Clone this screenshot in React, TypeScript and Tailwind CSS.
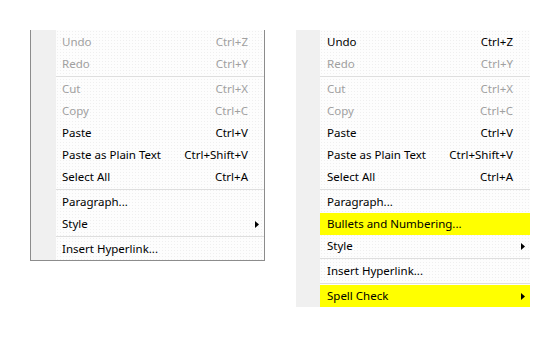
import React from 'react';

type Item =
  | { kind: 'sep' }
  | {
      kind: 'item';
      label: string;
      shortcut?: string;
      disabled?: boolean;
      submenu?: boolean;
      highlight?: boolean;
    };

const leftItems: Item[] = [
  { kind: 'item', label: 'Undo', shortcut: 'Ctrl+Z', disabled: true },
  { kind: 'item', label: 'Redo', shortcut: 'Ctrl+Y', disabled: true },
  { kind: 'sep' },
  { kind: 'item', label: 'Cut', shortcut: 'Ctrl+X', disabled: true },
  { kind: 'item', label: 'Copy', shortcut: 'Ctrl+C', disabled: true },
  { kind: 'item', label: 'Paste', shortcut: 'Ctrl+V' },
  { kind: 'item', label: 'Paste as Plain Text', shortcut: 'Ctrl+Shift+V' },
  { kind: 'item', label: 'Select All', shortcut: 'Ctrl+A' },
  { kind: 'sep' },
  { kind: 'item', label: 'Paragraph...' },
  { kind: 'item', label: 'Style', submenu: true },
  { kind: 'sep' },
  { kind: 'item', label: 'Insert Hyperlink...' },
];

const rightItems: Item[] = [
  { kind: 'item', label: 'Undo', shortcut: 'Ctrl+Z' },
  { kind: 'item', label: 'Redo', shortcut: 'Ctrl+Y', disabled: true },
  { kind: 'sep' },
  { kind: 'item', label: 'Cut', shortcut: 'Ctrl+X', disabled: true },
  { kind: 'item', label: 'Copy', shortcut: 'Ctrl+C', disabled: true },
  { kind: 'item', label: 'Paste', shortcut: 'Ctrl+V' },
  { kind: 'item', label: 'Paste as Plain Text', shortcut: 'Ctrl+Shift+V' },
  { kind: 'item', label: 'Select All', shortcut: 'Ctrl+A' },
  { kind: 'sep' },
  { kind: 'item', label: 'Paragraph...' },
  { kind: 'item', label: 'Bullets and Numbering...', highlight: true },
  { kind: 'item', label: 'Style', submenu: true },
  { kind: 'sep' },
  { kind: 'item', label: 'Insert Hyperlink...' },
  { kind: 'sep' },
  { kind: 'item', label: 'Spell Check', submenu: true, highlight: true },
];

const Arrow = () => (
  <svg width="4" height="7" viewBox="0 0 4 7" className="block">
    <path d="M0 0 L4 3.5 L0 7 Z" fill="#000" />
  </svg>
);

const dots =
  'bg-[#fdfdfd] bg-[radial-gradient(#efefef_0.6px,transparent_0.7px)] bg-[size:3px_3px]';

const MenuRows: React.FC<{ items: Item[]; padL: string; padR: string }> = ({
  items,
  padL,
  padR,
}) => (
  <div className={`flex-1 flex flex-col pt-px ${dots}`}>
    {items.map((it, i) =>
      it.kind === 'sep' ? (
        <div key={i} className="h-[3px] flex items-center">
          <div className="h-px w-full bg-[#dedede]" />
        </div>
      ) : (
        <div
          key={i}
          className={`h-[22px] flex items-center ${padL} pr-[5px] ${
            it.highlight ? 'bg-[#ffff00]' : ''
          } ${it.disabled ? 'text-[#a0a0a0]' : 'text-black'}`}
        >
          <span className="flex-1 whitespace-nowrap">{it.label}</span>
          {it.shortcut && <span className={`whitespace-nowrap ${padR}`}>{it.shortcut}</span>}
          {it.submenu && <Arrow />}
        </div>
      )
    )}
  </div>
);

const App: React.FC = () => {
  return (
    <div
      className="w-[560px] h-[338px] bg-white flex items-start pt-[30px] pl-[30px] text-[11.5px] leading-none"
      style={{ fontFamily: '"Noto Sans", "Open Sans", sans-serif' }}
    >
      <div className="w-[235px] flex border-l border-r border-b border-[#8c8c8c]">
        <div className="w-[25px] bg-[#f0f0f0]" />
        <MenuRows items={leftItems} padL="pl-[6px]" padR="mr-[11px]" />
      </div>
      <div className="ml-[31px] w-[234px] flex">
        <div className="w-[24px] bg-[#f0f0f0]" />
        <MenuRows items={rightItems} padL="pl-[7px]" padR="mr-[12px]" />
      </div>
    </div>
  );
};

export default App;
